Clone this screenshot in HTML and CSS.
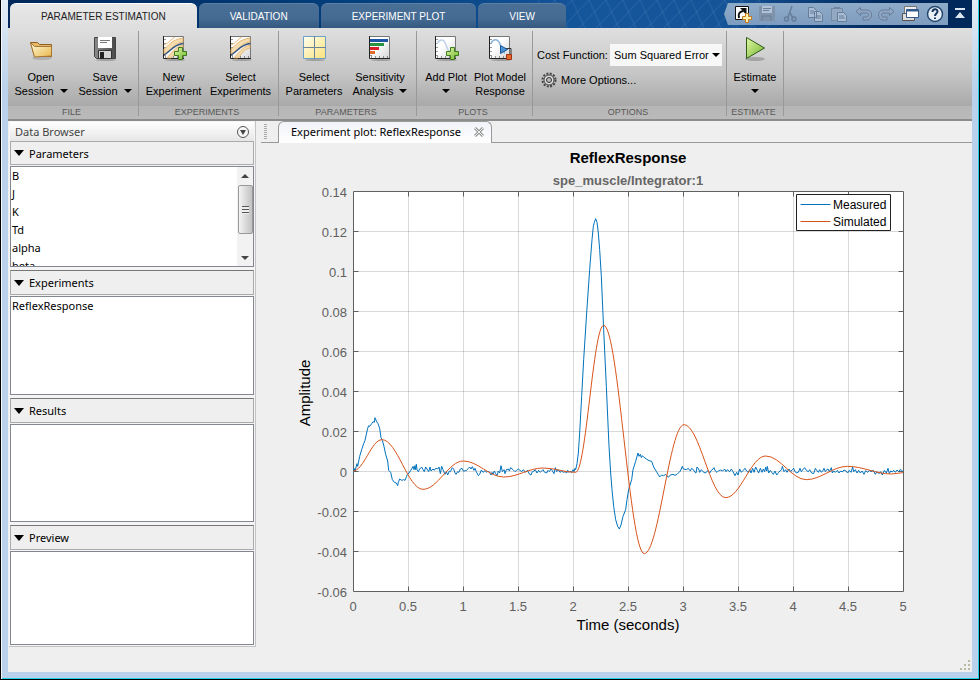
FILE: index.html
```html
<!DOCTYPE html>
<html lang="en">
<head>
<meta charset="utf-8">
<title>Parameter Estimation</title>
<link rel="stylesheet" href="styles.css">
</head>
<body>
<svg class="defs" aria-hidden="true">
  <defs>
    <linearGradient id="paper" x1="0" y1="0" x2="1" y2="1"><stop offset=".4" stop-color="#fff"/><stop offset="1" stop-color="#d4d4d4"/></linearGradient>
    <linearGradient id="gold" x1="0" y1="0" x2="1" y2="1"><stop offset="0" stop-color="#fffbe0"/><stop offset="1" stop-color="#e9b84c"/></linearGradient>
    <linearGradient id="green" x1="0" y1="0" x2="1" y2="1"><stop offset="0" stop-color="#e2f7a8"/><stop offset="1" stop-color="#6fb52a"/></linearGradient>
    <linearGradient id="metal" x1="0" y1="0" x2="1" y2="0"><stop offset="0" stop-color="#8a8a8a"/><stop offset="1" stop-color="#4a4a4a"/></linearGradient>
    <linearGradient id="yellow" x1="0" y1="0" x2="1" y2="1"><stop offset="0" stop-color="#fffef0"/><stop offset="1" stop-color="#fae27a"/></linearGradient>
    <pattern id="mesh" width="17" height="24" patternUnits="userSpaceOnUse" patternTransform="skewX(-14)">
      <path d="M0 0L17 24M17 0L0 24" fill="none" stroke="#5f93c6" stroke-opacity=".35" stroke-width=".8"/>
    </pattern>
    <g id="frame">
      <ellipse cx="14" cy="25" rx="10" ry="1" fill="#000" fill-opacity=".22"/>
      <path d="M2 1.500h21v22H2z" fill="url(#paper)"/>
      <path d="M2.500 23V1.500h20V23" fill="none" stroke="#777"/>
      <path d="M2.500 1v22.500H23" fill="none" stroke="#222"/>
      <path d="M4 4v19M4 22h19" fill="none" stroke="#333" stroke-dasharray="1 3"/>
    </g>
    <g id="bands">
      <path d="M3 14C8 11 9 5 22 3v4C13 8 12 14 3 19zM6 23C10 19 14 12 22 10v3C16 14 14 19 10 23z" fill="#f4dcae" stroke="#dfa85a" stroke-width=".8"/>
      <path d="M3 20C10 16 12 10 22 8.500" fill="none" stroke="#32517c" stroke-width="1.300"/>
      <path d="M3 10C8 8 9 5 14 2" fill="none" stroke="#e5b878"/>
    </g>
    <path id="plus" d="M17.500 12.500h4v4h4v4h-4v4h-4v-4h-4v-4h4z" fill="url(#green)" stroke="#3d7d1c"/>
    <g id="disk">
      <path d="M2 2h16v15H2z" fill="#7f93aa"/><path d="M5 2h10v7H5z" fill="#b2c3d8"/><path d="M6 4.500h8M6 6.500h6M5 17v-5h9v5" fill="none" stroke="#687e98"/>
    </g>
  </defs>
</svg>
<div class="window">
  <header class="topbar">
    <svg class="mesh" aria-hidden="true"><rect width="100%" height="100%" fill="url(#mesh)"/></svg>
    <nav class="tabs" role="tablist">
      <button class="tab tab-active" role="tab" aria-selected="true">PARAMETER ESTIMATION</button>
      <button class="tab" role="tab">VALIDATION</button>
      <button class="tab" role="tab">EXPERIMENT PLOT</button>
      <button class="tab" role="tab">VIEW</button>
    </nav>
    <div class="quick">
      <button aria-label="Add shortcut"><svg width="20" height="20"><path d="M2.500 2.500h13v13h-13z" fill="#fff" stroke="#111"/><path d="M6 14c-1-4 0-6 4-7" fill="none" stroke="#111" stroke-width="2"/><path d="M7 4h6.500v6.500L11 8.500 9 6z" fill="#111"/><path d="M12.500 9.500h3v3h3v3h-3v3h-3v-3h-3v-3h3z" fill="#fff1b0" stroke="#c97718"/></svg></button>
      <button aria-label="Save"><svg width="20" height="20"><use href="#disk"/></svg></button>
      <button aria-label="Cut"><svg width="20" height="20"><path d="M11 2L7 13M9 9l3 5" fill="none" stroke="#667d99" stroke-width="1.500"/><circle cx="5.500" cy="15" r="2" fill="none" stroke="#667d99" stroke-width="1.500"/><circle cx="13" cy="15" r="2" fill="none" stroke="#667d99" stroke-width="1.500"/></svg></button>
      <button aria-label="Copy"><svg width="20" height="20"><path d="M3.500 3.500h5l3 3v7h-8zM9.500 7.500h5l3 3v7h-8z" fill="#a9bdd5" stroke="#667d99"/><path d="M5 7h4M5 9h4M11 12h5M11 14h5" stroke="#667d99"/></svg></button>
      <button aria-label="Paste"><svg width="20" height="20"><path d="M2.500 4.500h11v12h-11z" fill="#93a9c3" stroke="#7389a4"/><path d="M5 5V3h6v2z" fill="#72879f"/><path d="M8.500 8.500h6l3 3v6h-9z" fill="#a9bdd5" stroke="#667d99"/><path d="M10 12h5M10 14h6" stroke="#667d99"/></svg></button>
      <button aria-label="Undo"><svg width="20" height="20"><path d="M7.500 3.500L3 7.500l4.500 4v-2.500H14c2 0 2 4 0 4h-4v3h4c6 0 6-10 0-10H7.500z" fill="#90a7c3" stroke="#667d99"/></svg></button>
      <button aria-label="Redo"><svg width="20" height="20"><path d="M12.500 3.500L17 7.500l-4.500 4v-2.500H6c-2 0-2 4 0 4h4v3H6c-6 0-6-10 0-10h6.500z" fill="#90a7c3" stroke="#667d99"/></svg></button>
      <button aria-label="Switch windows"><svg width="20" height="20"><path d="M3.500 2.500h12v9h-12z" fill="#eee" stroke="#777"/><path d="M1.500 9.500h12v7h-12z" fill="#ddd" stroke="#555"/><path d="M5.500 5.500h12v8h-12z" fill="#fff" stroke="#345a8c"/><path d="M6 6.500h11" stroke="#345a8c" stroke-width="2"/></svg></button>
      <button aria-label="Help"><svg width="20" height="20"><circle cx="10" cy="10" r="7.500" fill="#eaf0f7" stroke="#24486f" stroke-width="1.500"/><path d="M7.500 8c0-3.500 5-3.500 5-.5 0 2-2.500 2-2.500 4.500M10 13.500v1.500" fill="none" stroke="#17365c" stroke-width="2"/></svg></button>
    </div>
    <button class="collapse" aria-label="Minimize toolstrip"><svg width="12" height="12"><path d="M1 0h10v2H1zM6 4l5 6H1z" fill="#dce6f0"/></svg></button>
  </header>

  <div class="toolstrip">
    <section class="group group-file">
      <div class="tools">
        <button class="tool"><svg class="icon"><ellipse cx="14" cy="23" rx="10" ry="2" fill="#000" fill-opacity=".14"/><path d="M2.500 7.500h7l2 2h12v12h-17z" fill="#e5b767" stroke="#90611f"/><path d="M2.500 7.500l4 4h17v9.500l-17 1z" fill="url(#gold)" stroke="#a57735"/></svg><span>Open</span><span class="drop">Session</span></button>
        <button class="tool"><svg class="icon"><ellipse cx="14" cy="25" rx="10" ry="1" fill="#000" fill-opacity=".22"/><path d="M2.500 2.500h21v21h-19l-2-2z" fill="url(#metal)" stroke="#444"/><path d="M6 2h14v11H6z" fill="#fff"/><path d="M8 5.500h10M8 7.500h7" stroke="#777"/><path d="M6.500 15.500h13v8h-13z" fill="#d5d5d5" stroke="#333"/><path d="M8 17h4v7H8z" fill="#222"/></svg><span>Save</span><span class="drop">Session</span></button>
      </div>
      <h2>FILE</h2>
    </section>
    <section class="group group-experiments">
      <div class="tools">
        <button class="tool"><svg class="icon"><use href="#frame"/><use href="#bands"/><use href="#plus"/></svg><span>New</span><span>Experiment</span></button>
        <button class="tool"><svg class="icon"><use href="#frame"/><use href="#bands"/></svg><span>Select</span><span>Experiments</span></button>
      </div>
      <h2>EXPERIMENTS</h2>
    </section>
    <section class="group group-parameters">
      <div class="tools">
        <button class="tool"><svg class="icon"><ellipse cx="14" cy="25" rx="10" ry="1" fill="#000" fill-opacity=".22"/><path d="M2.500 1.500h22v22h-22z" fill="url(#yellow)" stroke="#6d9fc4"/><path d="M13.500 1v23M2 12.500h23" stroke="#6c8498"/></svg><span>Select</span><span>Parameters</span></button>
        <button class="tool"><svg class="icon"><use href="#frame"/><path d="M3 4h18v3H3z" fill="#1c55a5"/><path d="M3 8h14v3H3z" fill="#2a9342"/><path d="M3 12h9v3H3z" fill="#d9202a"/><path d="M3 16h5v3H3z" fill="#e16a2a"/></svg><span>Sensitivity</span><span class="drop">Analysis</span></button>
      </div>
      <h2>PARAMETERS</h2>
    </section>
    <section class="group group-plots">
      <div class="tools">
        <button class="tool"><svg class="icon"><use href="#frame"/><path d="M4 9C7 3 11 4 13 10s5 10 9 9" fill="none" stroke="#bfd3ea" stroke-width="1.500"/><use href="#plus"/></svg><span>Add Plot</span><span class="drop" aria-hidden="true"></span></button>
        <button class="tool"><svg class="icon"><use href="#frame"/><path d="M4 8C7 3 11 4 13 9s3 8 5 9" fill="none" stroke="#8db4dc" stroke-width="1.500"/><path d="M16 13.500h8v6" fill="none" stroke="#333"/><path d="M13.500 10.500v8l7-4z" fill="#4d94d5" stroke="#1c5797"/><path d="M19.500 19.500h5v5h-5z" fill="#e8692e" stroke="#9c3510"/></svg><span>Plot Model</span><span>Response</span></button>
      </div>
      <h2>PLOTS</h2>
    </section>
    <section class="group group-options">
      <div class="options">
        <div class="option-row">
          <label for="cost">Cost Function:</label>
          <div class="select-box"><select id="cost"><option>Sum Squared Error</option></select></div>
        </div>
        <button class="more"><svg width="16" height="16"><circle cx="8" cy="8" r="6.500" fill="none" stroke="#444" stroke-width="2" stroke-dasharray="2 1.400"/><circle cx="8" cy="8" r="5" fill="#ddd" stroke="#444"/><circle cx="8" cy="8" r="2.500" fill="#bbb" stroke="#333"/></svg>More Options...</button>
      </div>
      <h2>OPTIONS</h2>
    </section>
    <section class="group group-estimate">
      <div class="tools">
        <button class="tool"><svg class="icon"><ellipse cx="13" cy="24" rx="10" ry="2" fill="#000" fill-opacity=".2"/><path d="M4.500 2.500v21l18-10.500z" fill="url(#green)" stroke="#2d5a18"/></svg><span>Estimate</span><span class="drop" aria-hidden="true"></span></button>
      </div>
      <h2>ESTIMATE</h2>
    </section>
  </div>

  <div class="workspace">
    <aside class="browser">
      <div class="browser-title"><span>Data Browser</span><button aria-label="Data Browser actions"><svg width="14" height="14"><circle cx="7" cy="7" r="5.500" fill="#f6f6f6" stroke="#555"/><path d="M4 5h6L7 10z" fill="#444"/></svg></button></div>
      <section class="panel">
        <button class="panel-head" aria-expanded="true">Parameters</button>
        <div class="list list-parameters">
          <ul><li>B</li><li>J</li><li>K</li><li>Td</li><li>alpha</li><li>beta</li></ul>
          <div class="scroll" aria-hidden="true"><i class="up"></i><i class="thumb"></i><i class="down"></i></div>
        </div>
      </section>
      <section class="panel">
        <button class="panel-head" aria-expanded="true">Experiments</button>
        <div class="list list-experiments"><ul><li>ReflexResponse</li></ul></div>
      </section>
      <section class="panel">
        <button class="panel-head" aria-expanded="true">Results</button>
        <div class="list list-results"></div>
      </section>
      <section class="panel">
        <button class="panel-head" aria-expanded="true">Preview</button>
        <div class="list list-preview"></div>
      </section>
    </aside>
    <main class="document">
      <div class="doc-tabs">
        <span class="grip"></span>
        <div class="doc-tab"><span>Experiment plot: ReflexResponse</span><button aria-label="Close"><svg width="10" height="10"><path d="M1 1l8 8M9 1L1 9" stroke="#999" stroke-width="3"/><path d="M1 1l8 8M9 1L1 9" stroke="#eee"/></svg></button></div>
        <span class="doc-line"></span>
      </div>
      <svg class="chart" viewBox="-92 -48 711 522" role="img" aria-label="ReflexResponse plot">
        <g transform="translate(.5 .5)">
          <path d="M0 0h550v400H0z" fill="#fff"/>
          <path class="gridline" d="M55 0v400M110 0v400M165 0v400M220 0v400M275 0v400M330 0v400M385 0v400M440 0v400M495 0v400M0 40h550M0 80h550M0 120h550M0 160h550M0 200h550M0 240h550M0 280h550M0 320h550M0 360h550"/>
          <path class="axis" d="M0 0h550v400H0zM55 0v5M110 0v5M165 0v5M220 0v5M275 0v5M330 0v5M385 0v5M440 0v5M495 0v5M55 400v-5M110 400v-5M165 400v-5M220 400v-5M275 400v-5M330 400v-5M385 400v-5M440 400v-5M495 400v-5M0 40h5M0 80h5M0 120h5M0 160h5M0 200h5M0 240h5M0 280h5M0 320h5M0 360h5M550 40h-5M550 80h-5M550 120h-5M550 160h-5M550 200h-5M550 240h-5M550 280h-5M550 320h-5M550 360h-5"/>
        </g>
        <svg x="0" y="0" width="550" height="400" viewBox="0 -840 1650 1200">
          <polyline class="trace measured" points="0,8 3,-8 6,0 12,-22 14,-14 20,-44 26,-64 32,-82 36,-92 40,-110 44,-128 47,-136 50,-134 56,-142 60,-148 64,-146 66,-160 70,-150 75,-142 80,-128 84,-100 88,-92 92,-78 98,-50 104,-30 107,-2 113,4 118,26 124,34 130,36 134,44 136,34 140,24 146,28 152,26 156,28 161,16 163,10 168,6 172,0 176,-6 180,-14 183,-4 186,-16 188,-4 190,-20 192,-4 196,2 200,-6 206,-12 210,-4 214,2 218,-12 222,-6 227,2 231,-12 234,0 240,-6 244,-2 248,-8 254,-6 258,-12 262,8 266,-14 270,-4 276,10 280,2 284,12 289,0 292,2 298,-10 302,-6 306,6 309,10 314,2 318,4 322,-6 327,-8 331,0 340,-1 346,-8 350,-12 354,-6 358,-13 363,-2 366,-8 370,2 376,14 380,10 385,-3 390,4 396,-1 402,4 406,0 411,6 414,12 417,4 420,10 424,0 428,8 432,14 436,0 440,6 444,-16 448,2 453,-4 456,8 460,-4 466,-6 469,0 473,-10 480,-4 486,2 491,-2 496,-6 501,-2 506,2 511,-4 517,4 523,-2 530,10 534,12 538,2 543,0 547,-4 552,6 557,-2 562,4 570,-4 575,4 581,6 585,-2 589,2 594,-6 598,-1 603,8 607,-10 611,2 616,-4 621,4 626,0 631,4 636,2 641,6 644,-2 648,4 652,0 656,5 660,-4 663,2 666,-8 668,-4 672,-22 676,-54 680,-114 686,-224 692,-334 701,-474 710,-604 717,-694 721,-734 724,-746 728,-757 732,-746 736,-714 740,-664 745,-584 752,-424 760,-254 768,-74 773,6 777,56 782,106 788,146 794,166 799,174 804,162 810,136 818,116 822,86 827,56 836,26 840,-4 848,-29 852,-44 855,-54 858,-44 862,-50 865,-40 868,-46 872,-42 880,-36 888,-31 896,-29 902,-12 910,1 916,11 920,18 926,12 932,14 938,10 946,19 952,12 960,10 966,13 972,10 976,6 982,0 988,-14 991,-6 1000,-4 1006,-8 1012,0 1016,-8 1023,-2 1026,4 1029,6 1032,-12 1037,-6 1040,4 1045,-4 1050,2 1056,6 1060,4 1065,-2 1070,6 1075,-2 1080,-6 1083,-10 1087,0 1092,4 1097,-1 1103,-3 1109,0 1115,-6 1119,2 1123,-4 1130,2 1135,-6 1140,2 1146,14 1151,4 1155,12 1160,-6 1165,4 1171,-2 1176,-8 1181,0 1186,4 1190,-4 1194,6 1199,-8 1203,4 1208,-12 1213,-2 1217,6 1222,-8 1227,4 1231,-6 1235,2 1238,-12 1241,0 1243,-14 1247,6 1252,-2 1256,4 1261,10 1266,0 1271,12 1277,4 1281,0 1286,-4 1288,-14 1293,2 1298,-4 1302,4 1308,-6 1313,2 1318,-4 1322,-8 1325,0 1330,6 1336,4 1341,-8 1345,2 1351,-6 1355,-10 1360,-2 1366,2 1370,-4 1376,6 1382,8 1387,-8 1391,-2 1396,4 1400,-4 1405,4 1409,0 1413,-8 1417,2 1421,-4 1425,-6 1429,2 1435,-10 1438,6 1442,0 1447,4 1453,-2 1458,6 1463,0 1468,3 1473,-3 1479,0 1484,6 1489,-2 1494,4 1499,-12 1502,2 1507,-4 1512,6 1517,-2 1522,6 1527,0 1533,10 1538,-1 1544,4 1549,-2 1554,2 1561,-2 1567,10 1572,2 1578,8 1583,2 1588,12 1594,-2 1600,6 1605,-8 1609,8 1613,0 1618,3 1622,-2 1627,4 1632,-3 1637,2 1641,-4 1646,-2 1650,2"/>
          <path class="trace simulated" d="M0 0C32 0 55-94 87-94C132-94 165 55 210 55C254 55 287-30 331-30C375-30 408 18 452 18C495 18 527-9 570-9C606-9 632 4 668 4C699 4 721-437 752-437C796-437 830 248 874 248C917 248 950-139 993-139C1039-139 1072 80 1118 80C1162 80 1194-45 1238-45C1282-45 1316 26 1360 26C1404 26 1439-14 1483-14C1531-14 1567 9 1615 9L1650 5"/>
        </svg>
        <g transform="translate(.5 .5)">
          <path class="legend-box" d="M443 3h94v36h-94z"/>
          <path class="trace measured" d="M447 13h30"/><path class="trace simulated" d="M447 30h30"/>
        </g>
        <g class="legend-text"><text x="480" y="18">Measured</text><text x="480" y="35">Simulated</text></g>
        <text class="chart-title" x="275" y="-28">ReflexResponse</text>
        <text class="chart-subtitle" x="275" y="-6">spe_muscle/Integrator:1</text>
        <g class="ticks ticks-y">
          <text x="-6" y="6">0.14</text><text x="-6" y="46">0.12</text><text x="-6" y="86">0.1</text><text x="-6" y="126">0.08</text><text x="-6" y="166">0.06</text><text x="-6" y="206">0.04</text><text x="-6" y="246">0.02</text><text x="-6" y="286">0</text><text x="-6" y="326">-0.02</text><text x="-6" y="366">-0.04</text><text x="-6" y="406">-0.06</text>
        </g>
        <g class="ticks ticks-x">
          <text x="0" y="420">0</text><text x="55" y="420">0.5</text><text x="110" y="420">1</text><text x="165" y="420">1.5</text><text x="220" y="420">2</text><text x="275" y="420">2.5</text><text x="330" y="420">3</text><text x="385" y="420">3.5</text><text x="440" y="420">4</text><text x="495" y="420">4.5</text><text x="550" y="420">5</text>
        </g>
        <text class="axis-name" x="275" y="439">Time (seconds)</text>
        <text class="axis-name" transform="translate(-43 202) rotate(-90)">Amplitude</text>
      </svg>
      <svg class="resize" width="12" height="12" aria-hidden="true"><path d="M9 1h2v2H9zM9 5h2v2H9zM9 9h2v2H9zM5 5h2v2H5zM5 9h2v2H5zM1 9h2v2H1z" fill="#b9b8a2"/></svg>
    </main>
  </div>
</div>
</body>
</html>
```
FILE: styles.css
```css
* { box-sizing: border-box; }
body { margin: 0; font-family: "Liberation Sans", Arial, sans-serif; font-size: 11px; color: #000; }
button { margin: 0; padding: 0; border: 0; background: none; color: inherit; font: inherit; }
h2, ul { margin: 0; padding: 0; font-weight: normal; list-style: none; }
svg { display: block; }
.defs { position: absolute; width: 0; height: 0; }

.window {
  display: flex; flex-direction: column; min-height: 100vh; padding: 0 7px 7px;
  border: solid #000; border-width: 0 1px 1px;
  background: linear-gradient(#e4ecf5, #b9d1ea 90px);
  box-shadow: inset 1px 0 #f4f8fc, inset -1px -1px #22cfe8;
}

.topbar {
  position: relative; display: flex; align-items: flex-end; height: 28px; padding-left: 2px;
  background: linear-gradient(90deg, #00285a, #003a77 30%, #15559a 60%, #165498 74%, #00285a 92%);
}
.mesh { position: absolute; left: 55%; top: 0; width: 24%; height: 100%; }
.tabs { display: flex; gap: 2px; align-self: stretch; padding-top: 3px; z-index: 1; }
.tab {
  padding: 0 31px; border-radius: 6px 6px 0 0;
  background: linear-gradient(#4a6f96, #456b92 60%, #345a82); border: solid #5c7fa4; border-width: 1px 0 0;
  color: #fff; font-size: 10px; white-space: nowrap;
}
.tab-active { background: linear-gradient(#e8e8e8, #dedede); border-color: #fff; color: #222; }
.quick {
  display: flex; align-items: center; align-self: flex-start; height: 22px; margin: 3px 0 0 auto; padding-left: 7px; padding-right: 1px;
  background: linear-gradient(#8fabc9, #7e9cbf);
  clip-path: polygon(4px 0, 100% 0, 100% 100%, 4px 100%, 0 50%); z-index: 1;
}
.quick button { display: flex; justify-content: center; width: 24px; }
.collapse { align-self: flex-start; margin: 8px 6px 0; z-index: 1; }

.toolstrip {
  display: flex; height: 93px; border-bottom: 2px solid #8c8c8c;
  background: linear-gradient(#dfdfdf, #c6c6c6 45px, #a9a9a9 78px, #b6b6b6 78px, #bababa);
}
.group { display: flex; flex-direction: column; position: relative; }
.group::after { content: ""; position: absolute; right: 0; top: 3px; bottom: 3px; width: 1px; background: #999; }
.group h2 { height: 13px; margin-right: 4px; font-size: 9px; line-height: 13px; text-align: center; color: #585858; }
.tools { display: flex; flex: 1; padding-left: 1px; }
.tool { display: flex; flex-direction: column; align-items: center; justify-content: flex-start; padding-top: 7px; line-height: 14px; white-space: nowrap; }
.icon { width: 26px; height: 26px; margin-bottom: 9px; }
.drop { display: flex; align-items: center; gap: 6px; min-height: 14px; }
.drop::after, .select-box::after { content: ""; border: solid transparent; border-width: 4px 4px 0; border-top-color: #000; }
.group-file { width: 131px; } .group-file .tool { width: 64px; }
.group-experiments { width: 140px; } .group-experiments .tool { width: 67px; }
.group-parameters { width: 138px; } .group-parameters .tools { padding-left: 2px; } .group-parameters .tool { width: 66px; }
.group-plots { width: 116px; } .group-plots .tools { padding-left: 2px; } .group-plots .tool { width: 54px; }
.group-options { width: 194px; }
.group-estimate { width: 57px; } .group-estimate .tool { width: 54px; }
.options { flex: 1; padding: 16px 5px 0 4px; }
.option-row { display: flex; align-items: center; justify-content: space-between; height: 22px; }
.select-box { position: relative; width: 112px; }
.select-box::after { position: absolute; right: 2px; top: 9px; pointer-events: none; }
select { appearance: none; width: 100%; height: 22px; padding: 0 4px; border: 0; border-radius: 0; background: #f7f7f7; font: inherit; color: #000; }
.more { display: flex; align-items: center; gap: 4px; margin: 6px 0 0 4px; }

.workspace { display: flex; flex: 1; background: #efefef; }
.browser {
  align-self: flex-start; width: 247px; padding: 1px; margin-left: 1px;
  font: 11px "Noto Sans", "Open Sans", sans-serif; background: #f4f4f4; border-right: 1px solid #c4c4c4; border-bottom: 1px solid #c4c4c4;
}
.browser-title { display: flex; align-items: center; justify-content: space-between; height: 19px; padding: 0 4px 0 5px; background: linear-gradient(#fff, #e6e6e6); color: #444; }
.panel { margin-bottom: 3px; }
.panel:last-child { margin-bottom: 0; }
.panel-head {
  display: flex; align-items: center; gap: 5px; width: 100%; height: 25px; margin-bottom: 1px; padding-left: 3px;
  border: 1px solid #aaa; border-top-color: #777; background: #efefef;
}
.browser-title + .panel .panel-head { height: 24px; border-top-color: #aaa; }
.panel-head::before { content: ""; border: solid transparent; border-width: 6px 5px 0; border-top-color: #000; }
.list { display: flex; overflow: hidden; border: 1px solid #828790; background: #fff; }
.list ul { flex: 1; padding-left: 1px; line-height: 18px; }
.list-parameters { height: 101px; }
.list-experiments { height: 99px; }
.list-results { height: 98px; }
.list-preview { height: 94px; }
.scroll { display: flex; flex-direction: column; align-items: center; width: 16px; padding: 7px 0 6px; background: #f2f2f2; }
.up, .down { border: solid transparent; border-width: 0 4px 4px; border-bottom-color: #444; }
.down { border-width: 4px 4px 0; border-top-color: #444; margin-top: auto; }
.thumb {
  display: flex; align-items: center; justify-content: center; width: 15px; height: 49px; margin-top: 7px; border: 1px solid #999; border-radius: 2px;
  background: linear-gradient(90deg, #f4f4f4, #dadada 50%, #c2c2c2);
}
.thumb::after { content: ""; width: 7px; height: 8px; background: repeating-linear-gradient(#555 0 1px, #eee 1px 3px); }

.document { position: relative; flex: 1; min-width: 0; padding-left: 5px; }
.doc-tabs { display: flex; height: 22px; font: 11px "Noto Sans", "Open Sans", sans-serif; }
.grip { width: 17px; border-bottom: 1px solid #999; background: repeating-linear-gradient(#aaa 0 1px, #efefef 1px 2px) 3px 3px / 3px 15px no-repeat; }
.doc-tab {
  display: flex; align-items: center; gap: 13px; padding: 0 7px 2px 12px; white-space: nowrap;
  border: solid #999; border-width: 1px 1px 0; border-radius: 6px 6px 0 0; background: linear-gradient(#f1f3f8, #fff);
}
.doc-line { flex: 1; border-bottom: 1px solid #999; }
.chart { width: 100%; height: auto; }
.gridline { fill: none; stroke: #000; stroke-opacity: .15; }
.axis { fill: none; stroke: #606060; }
.trace { fill: none; stroke-width: 1px; vector-effect: non-scaling-stroke; }
.measured { stroke: #0072bd; }
.simulated { stroke: #d95319; }
.legend-box { fill: #fff; stroke: #222; }
.legend-text { font-size: 12px; }
.chart-title, .chart-subtitle { font-size: 15px; font-weight: bold; text-anchor: middle; }
.chart-subtitle { font-size: 13px; fill: #666; }
.ticks { font-size: 13px; fill: #606060; }
.ticks-y { text-anchor: end; }
.ticks-x { text-anchor: middle; }
.axis-name { font-size: 15px; text-anchor: middle; }
.resize { position: absolute; right: 1px; bottom: 1px; }
```
